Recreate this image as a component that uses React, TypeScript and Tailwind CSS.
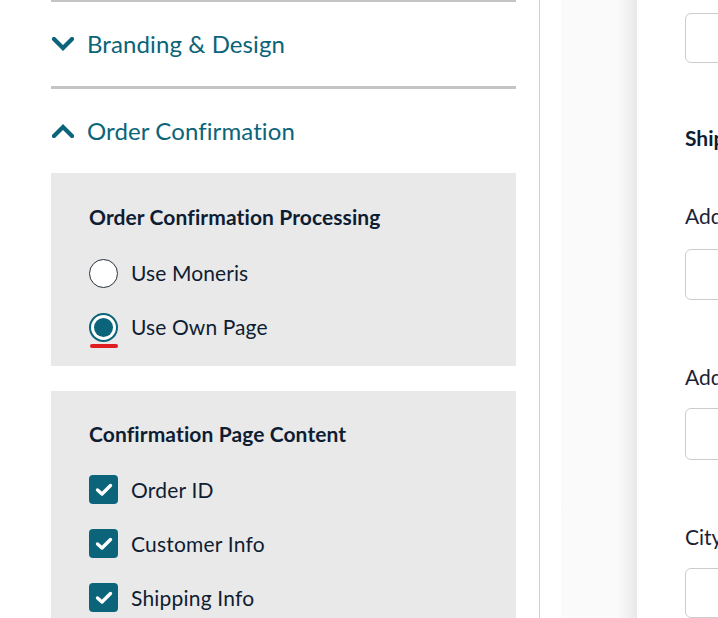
import React from "react";

const font = { fontFamily: "Lato, 'Noto Sans', sans-serif" };

function Chevron({ up }: { up?: boolean }) {
  return (
    <svg width="22" height="14" viewBox="0 0 22 14" className="shrink-0">
      <path
        d={up ? "M2 12 L11 3 L20 12" : "M2 2 L11 11 L20 2"}
        fill="none"
        stroke="#0b6479"
        strokeWidth="4.2"
        strokeLinecap="square"
        strokeLinejoin="miter"
      />
    </svg>
  );
}

function Radio({ checked, label }: { checked?: boolean; label: string }) {
  return (
    <div className="flex items-center h-[28px] gap-[13px]">
      <div className="relative w-[29px] h-[29px]">
        <div
          className={
            checked
              ? "w-[29px] h-[29px] rounded-full bg-white border-2 border-[#0b6479] flex items-center justify-center"
              : "w-[29px] h-[29px] rounded-full bg-white border border-[#2a2f3a]"
          }
        >
          {checked && <div className="w-[19px] h-[19px] rounded-full bg-[#0b6479]" />}
        </div>
        {checked && (
          <div className="absolute left-px top-[31px] w-[28px] h-[4px] rounded-full bg-[#e01b22]" />
        )}
      </div>
      <span className="text-[21px] tracking-[0.1px] text-[#0f1d33]">{label}</span>
    </div>
  );
}

function Check({ label }: { label: string }) {
  return (
    <div className="flex items-center h-[29px] gap-[13px]">
      <div className="w-[29px] h-[29px] rounded-[4px] bg-[#0b6479] flex items-center justify-center">
        <svg width="18" height="14" viewBox="0 0 18 14">
          <path d="M2.5 7 L7 11 L15.5 2.5" fill="none" stroke="white" strokeWidth="3.4" strokeLinecap="round" strokeLinejoin="round" />
        </svg>
      </div>
      <span className="text-[21px] tracking-[0.2px] text-[#0f1d33]">{label}</span>
    </div>
  );
}

export default function App() {
  return (
    <div className="flex h-[618px] w-[718px] overflow-hidden bg-white" style={font}>
      {/* left settings column */}
      <div className="w-[540px] shrink-0 border-r border-[#cfcfd6] pl-[51px] pr-[23px]">
        <div className="h-[2px] bg-[#c4c4c4]" />
        <div className="h-[84px] flex items-center gap-[13px] pl-px">
          <Chevron />
          <span className="text-[24px] text-[#0b6479] tracking-[0.1px]">Branding &amp; Design</span>
        </div>
        <div className="h-[3px] bg-[#c4c4c4]" />
        <div className="h-[84px] flex items-center gap-[13px] pl-px">
          <Chevron up />
          <span className="text-[24px] text-[#0b6479] tracking-[0.1px]">Order Confirmation</span>
        </div>

        <div className="bg-[#e9e9e9] h-[193px] pl-[38px] pt-[30px]">
          <h3 className="text-[21px] leading-[28px] font-bold text-[#0f1d33] tracking-[0.1px]">Order Confirmation Processing</h3>
          <div className="mt-[28px] flex flex-col gap-[26px]">
            <Radio label="Use Moneris" />
            <Radio checked label="Use Own Page" />
          </div>
        </div>

        <div className="bg-[#e9e9e9] mt-[25px] h-[260px] pl-[38px] pt-[29px]">
          <h3 className="text-[21px] leading-[28px] font-bold text-[#0f1d33] tracking-[0.1px]">Confirmation Page Content</h3>
          <div className="mt-[27px] flex flex-col gap-[25px]">
            <Check label="Order ID" />
            <Check label="Customer Info" />
            <Check label="Shipping Info" />
          </div>
        </div>
      </div>

      {/* preview area */}
      <div className="w-[21px] shrink-0" />
      <div className="w-[76px] shrink-0 bg-gradient-to-r from-[#fafafa] from-75% to-[#e8e8e8]" />
      <div className="flex-1 min-w-0 overflow-hidden pl-[48px] flex flex-col">
        <div className="mt-[13px] h-[50px] w-[200px] shrink-0 rounded-[6px] border border-[#cccccc]" />
        <h2 className="mt-[61px] text-[21px] leading-[28px] font-bold text-[#0f1d33] whitespace-nowrap">Shipping Address</h2>
        <label className="mt-[50px] text-[21px] leading-[28px] text-[#1a2336] whitespace-nowrap">Address Line 1</label>
        <div className="mt-[19px] h-[51px] w-[200px] shrink-0 rounded-[6px] border border-[#cccccc]" />
        <label className="mt-[63px] text-[21px] leading-[28px] text-[#1a2336] whitespace-nowrap">Address Line 2</label>
        <div className="mt-[17px] h-[52px] w-[200px] shrink-0 rounded-[6px] border border-[#cccccc]" />
        <label className="mt-[63px] text-[21px] leading-[28px] text-[#1a2336] whitespace-nowrap">City</label>
        <div className="mt-[17px] h-[50px] w-[200px] shrink-0 rounded-[6px] border border-[#cccccc]" />
      </div>
    </div>
  );
}
